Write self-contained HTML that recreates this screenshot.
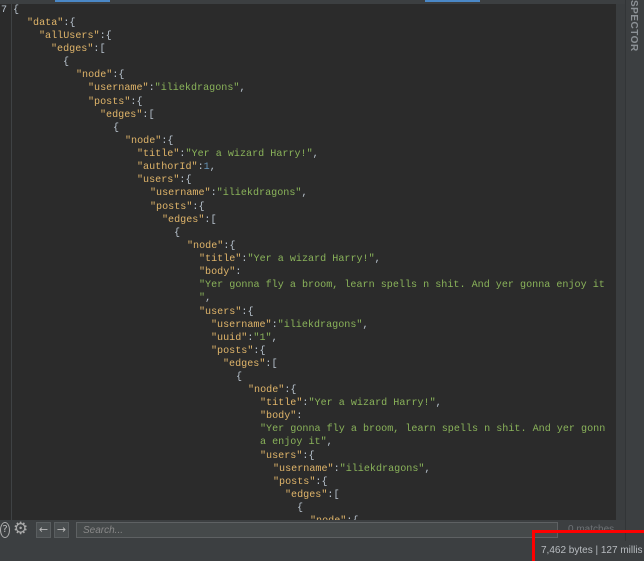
<!DOCTYPE html>
<html><head><style>
body{margin:0;width:644px;height:561px;background:#3c3f41;overflow:hidden;position:relative;font-family:"Liberation Mono",monospace;}
#top{position:absolute;left:0;top:0;width:625px;height:4px;background:#3c3f41}
#ed{position:absolute;left:0;top:4px;width:616px;height:516px;background:#2b2b2b;overflow:hidden}
#gut{position:absolute;left:11px;top:0;width:1px;height:516px;background:#3f4244}
.l{position:absolute;white-space:pre;font-size:10.1px;line-height:13px;color:#b9c4cf}
.k{color:#e0b56a}.s{color:#8ab35a}.n{color:#6897bb}
#sb{position:absolute;left:616px;top:4px;width:9px;height:516px;background:#3a3d3f}
#th{position:absolute;left:618px;top:10px;width:5px;height:16px;background:#5a5d60;border-radius:3px}
#rp{position:absolute;left:625px;top:0;width:19px;height:541px;background:#3c3f41;border-left:1px solid #323537}
#rp span{position:absolute;left:2px;top:0px;writing-mode:vertical-rl;font:bold 10px "Liberation Sans",sans-serif;color:#8c9196;letter-spacing:0.5px}
#srch{position:absolute;left:76px;top:522px;width:482px;height:16px;background:#45494a;border:1px solid #5e6163;font:italic 10px "Liberation Sans",sans-serif;color:#888;line-height:16px;padding-left:6px;box-sizing:border-box}
.btn{position:absolute;top:522px;width:15px;height:16px;background:#4a4e50;border:1px solid #5a5e60;box-sizing:border-box;color:#bbb;font:11px "DejaVu Sans",sans-serif;text-align:center;line-height:14px}
#st{position:absolute;left:541px;top:545px;font:10px "Liberation Sans",sans-serif;color:#b8bcc0}
#mt{position:absolute;left:568px;top:524px;font:10px "Liberation Sans",sans-serif;color:#6e7275}
#red{position:absolute;left:532px;top:530px;width:112px;height:31px;border:3px solid #f00;border-right:none;border-bottom:none;box-sizing:border-box}
</style></head><body>
<div id="top"><div style="position:absolute;left:55px;top:0;width:55px;height:2px;background:#4a88c7"></div><div style="position:absolute;left:425px;top:0;width:55px;height:2px;background:#4a88c7"></div></div>
<div id="ed">
<div id="gut"></div>
<div class="l" style="left:1px;top:0">7</div>
<div class="l" style="left:13px;top:0">{</div>
<div class="l" style="left:27px;top:13px"><span class="k">"data"</span>:{</div>
<div class="l" style="left:39px;top:26px"><span class="k">"allUsers"</span>:{</div>
<div class="l" style="left:51px;top:39px"><span class="k">"edges"</span>:[</div>
<div class="l" style="left:63px;top:52px">{</div>
<div class="l" style="left:76px;top:65px"><span class="k">"node"</span>:{</div>
<div class="l" style="left:88px;top:78px"><span class="k">"username"</span>:<span class="s">"iliekdragons"</span>,</div>
<div class="l" style="left:88px;top:92px"><span class="k">"posts"</span>:{</div>
<div class="l" style="left:100px;top:105px"><span class="k">"edges"</span>:[</div>
<div class="l" style="left:113px;top:118px">{</div>
<div class="l" style="left:125px;top:131px"><span class="k">"node"</span>:{</div>
<div class="l" style="left:137px;top:144px"><span class="k">"title"</span>:<span class="s">"Yer a wizard Harry!"</span>,</div>
<div class="l" style="left:137px;top:157px"><span class="k">"authorId"</span>:<span class="n">1</span>,</div>
<div class="l" style="left:137px;top:170px"><span class="k">"users"</span>:{</div>
<div class="l" style="left:150px;top:183px"><span class="k">"username"</span>:<span class="s">"iliekdragons"</span>,</div>
<div class="l" style="left:150px;top:197px"><span class="k">"posts"</span>:{</div>
<div class="l" style="left:162px;top:210px"><span class="k">"edges"</span>:[</div>
<div class="l" style="left:174px;top:223px">{</div>
<div class="l" style="left:187px;top:236px"><span class="k">"node"</span>:{</div>
<div class="l" style="left:199px;top:249px"><span class="k">"title"</span>:<span class="s">"Yer a wizard Harry!"</span>,</div>
<div class="l" style="left:199px;top:262px"><span class="k">"body"</span>:</div>
<div class="l" style="left:199px;top:275px"><span class="s">"Yer gonna fly a broom, learn spells n shit. And yer gonna enjoy it</span></div>
<div class="l" style="left:199px;top:288px"><span class="s">"</span>,</div>
<div class="l" style="left:199px;top:302px"><span class="k">"users"</span>:{</div>
<div class="l" style="left:211px;top:315px"><span class="k">"username"</span>:<span class="s">"iliekdragons"</span>,</div>
<div class="l" style="left:211px;top:328px"><span class="k">"uuid"</span>:<span class="s">"1"</span>,</div>
<div class="l" style="left:211px;top:341px"><span class="k">"posts"</span>:{</div>
<div class="l" style="left:223px;top:354px"><span class="k">"edges"</span>:[</div>
<div class="l" style="left:236px;top:367px">{</div>
<div class="l" style="left:248px;top:380px"><span class="k">"node"</span>:{</div>
<div class="l" style="left:260px;top:393px"><span class="k">"title"</span>:<span class="s">"Yer a wizard Harry!"</span>,</div>
<div class="l" style="left:260px;top:406px"><span class="k">"body"</span>:</div>
<div class="l" style="left:260px;top:419px"><span class="s">"Yer gonna fly a broom, learn spells n shit. And yer gonn</span></div>
<div class="l" style="left:260px;top:432px"><span class="s">a enjoy it"</span>,</div>
<div class="l" style="left:260px;top:446px"><span class="k">"users"</span>:{</div>
<div class="l" style="left:273px;top:459px"><span class="k">"username"</span>:<span class="s">"iliekdragons"</span>,</div>
<div class="l" style="left:273px;top:472px"><span class="k">"posts"</span>:{</div>
<div class="l" style="left:285px;top:485px"><span class="k">"edges"</span>:[</div>
<div class="l" style="left:297px;top:498px">{</div>
<div class="l" style="left:310px;top:511px"><span class="k">"node"</span>:{</div>
</div>
<div id="sb"><div id="th"></div></div>
<div id="rp"><span>SPECTOR</span></div>
<div style="position:absolute;left:0;top:522px;width:10px;height:16px;border:1px solid #aaa;border-radius:50%;box-sizing:border-box;color:#bbb;font:10px 'DejaVu Sans',sans-serif;text-align:center;line-height:14px">?</div>
<div style="position:absolute;left:13px;top:519px;color:#aaa;font:17px 'DejaVu Sans',sans-serif">⚙</div>
<div class="btn" style="left:36px">←</div>
<div class="btn" style="left:54px">→</div>
<div id="srch">Search...</div>
<div id="mt">0 matches</div>
<div id="st">7,462 bytes | 127 millis</div>
<div id="red"></div>
</body></html>
